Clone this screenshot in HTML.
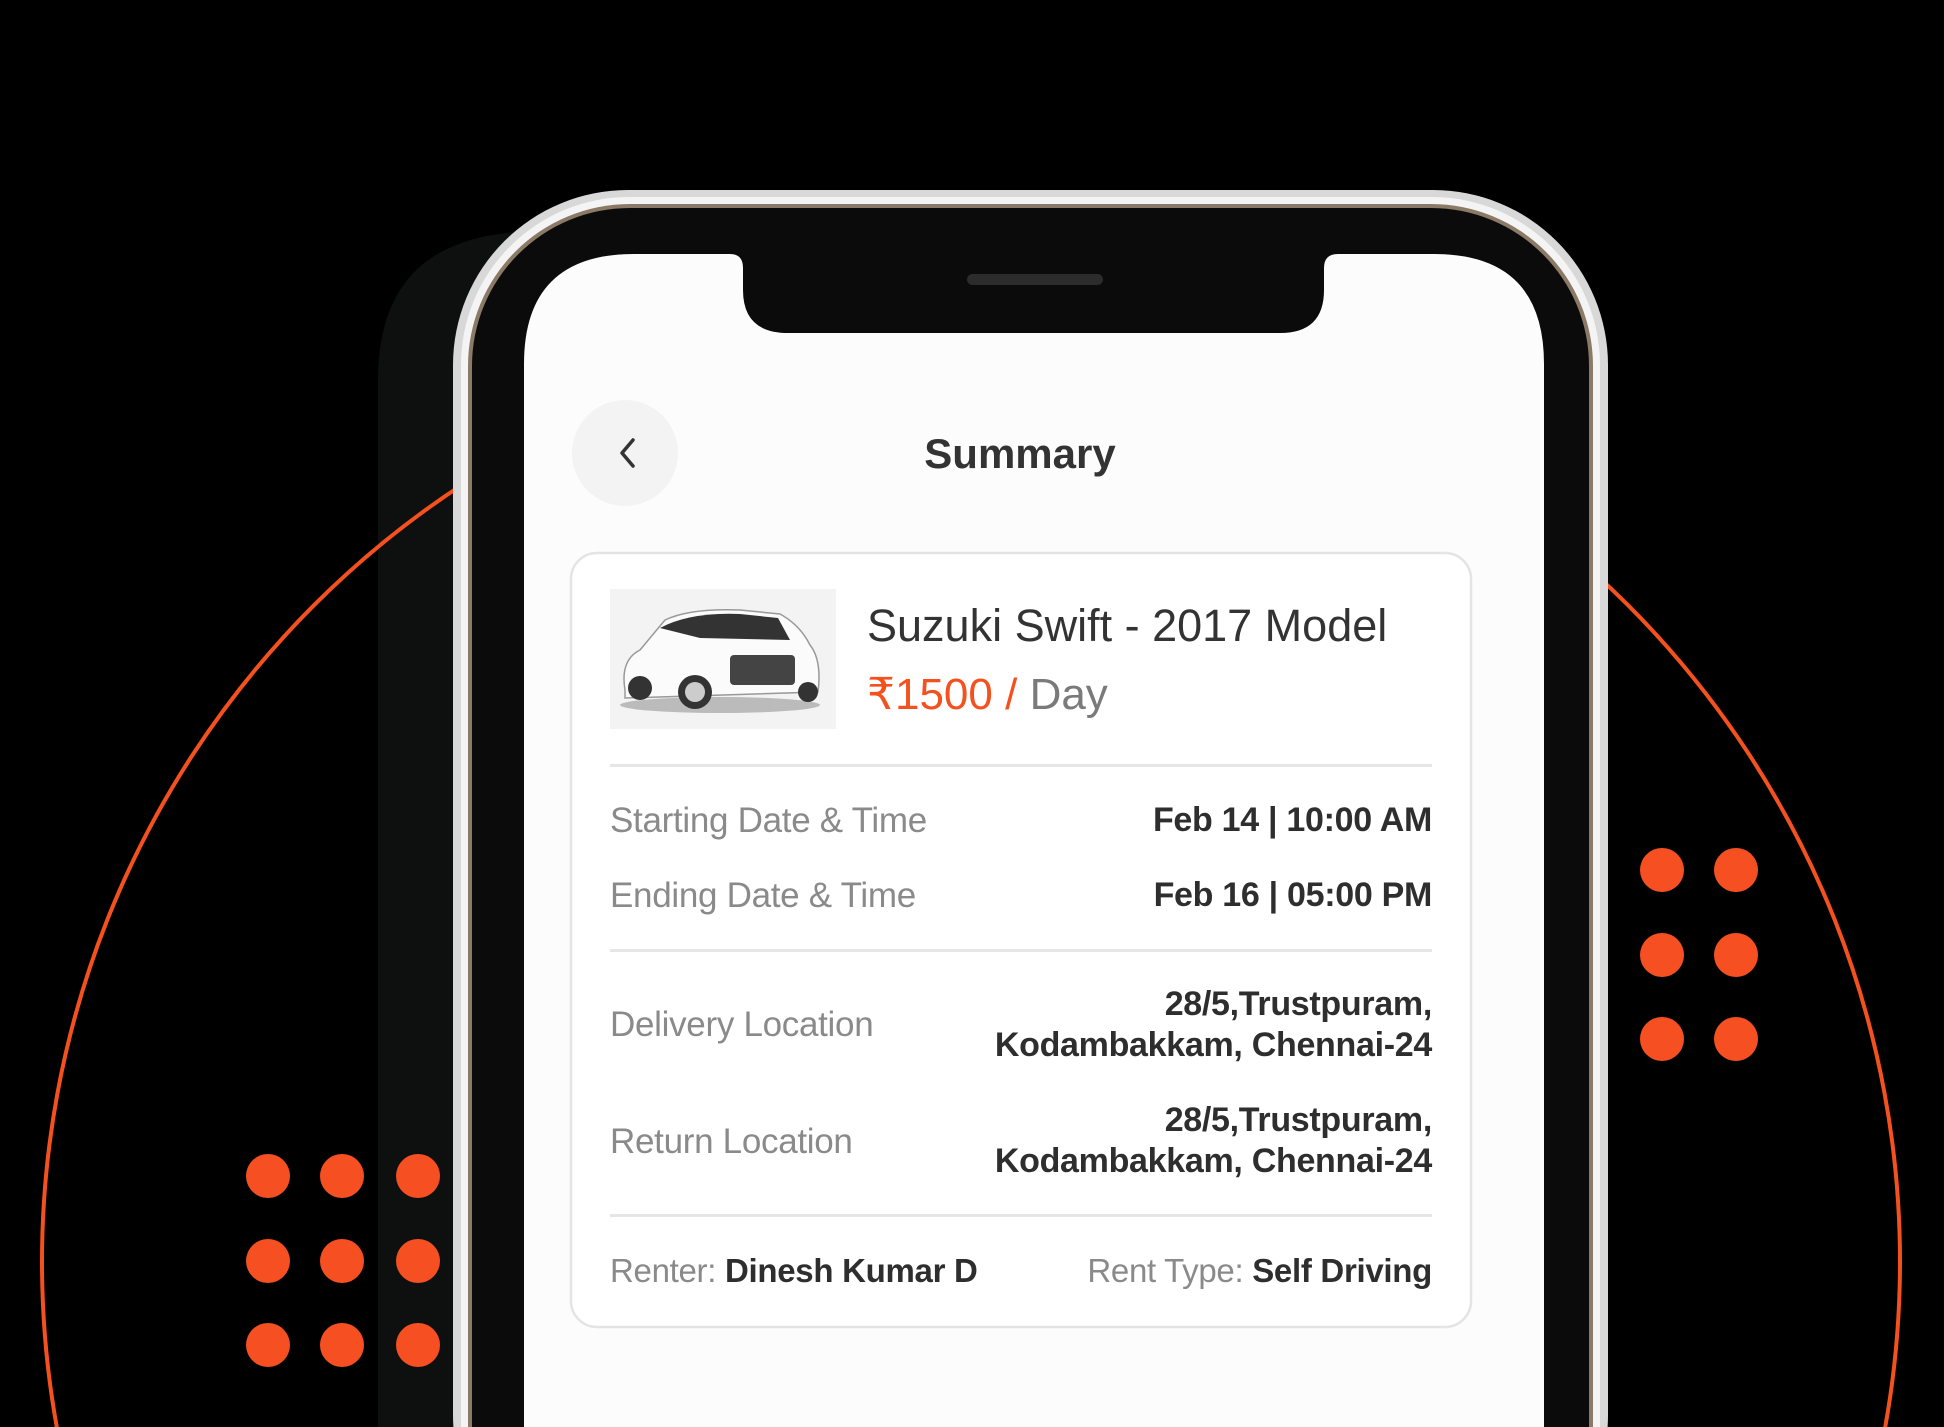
<!DOCTYPE html>
<html><head><meta charset="utf-8"><style>
*{margin:0;padding:0;box-sizing:border-box}
html,body{width:1944px;height:1427px;overflow:hidden}
body{background:#000;position:relative;font-family:"Liberation Sans",sans-serif}
.t{position:absolute;white-space:nowrap;line-height:1}
.lbl{color:#8a8a8a;font-size:35px;letter-spacing:-0.3px}
.val{color:#2e2e2e;font-size:34px;font-weight:bold;letter-spacing:-0.3px}
.r{text-align:right}
</style></head><body>
<svg width="1944" height="1427" style="position:absolute;left:0;top:0">
  <path d="M378 1427 L378 380 Q378 240 520 232 L600 232 L600 1427 Z" fill="#0e1010"/>
  <circle cx="971" cy="1262" r="929" fill="none" stroke="#f4511e" stroke-width="4"/>
  <g fill="#f65022">
    <circle cx="1662" cy="870" r="22"/><circle cx="1736" cy="870" r="22"/>
    <circle cx="1662" cy="955" r="22"/><circle cx="1736" cy="955" r="22"/>
    <circle cx="1662" cy="1039" r="22"/><circle cx="1736" cy="1039" r="22"/>
    <circle cx="268" cy="1176" r="22"/><circle cx="342" cy="1176" r="22"/><circle cx="418" cy="1176" r="22"/>
    <circle cx="268" cy="1261" r="22"/><circle cx="342" cy="1261" r="22"/><circle cx="418" cy="1261" r="22"/>
    <circle cx="268" cy="1345" r="22"/><circle cx="342" cy="1345" r="22"/><circle cx="418" cy="1345" r="22"/>
  </g>
  <rect x="453" y="190" width="1155" height="1400" rx="175" fill="#d8d8d8"/>
  <rect x="461" y="197" width="1139" height="1400" rx="168" fill="#f4f4f4"/>
  <rect x="468" y="204" width="1125" height="1400" rx="162" fill="#8a7a66"/>
  <rect x="472" y="208" width="1117" height="1400" rx="158" fill="#0b0b0b"/>
  <path d="M524 1500 L524 364 Q524 254 634 254 L730 254 Q743 254 743 268 L743 290 Q743 333 788 333 L1280 333 Q1324 333 1324 290 L1324 268 Q1324 254 1338 254 L1434 254 Q1544 254 1544 364 L1544 1500 Z" fill="#fcfcfc"/>
  <rect x="967" y="274" width="136" height="11" rx="5.5" fill="#2c2c2c"/>
  <circle cx="625" cy="453" r="53" fill="#f3f3f3"/>
  <path d="M633 440 L622 453 L633 466" fill="none" stroke="#333" stroke-width="3.5" stroke-linecap="round" stroke-linejoin="round"/>
  <rect x="571" y="553" width="900" height="774" rx="26" fill="#fff" stroke="#e4e4e4" stroke-width="2.5"/>
  <rect x="610" y="589" width="226" height="140" fill="#f3f3f3"/>
  <g>
    <ellipse cx="720" cy="705" rx="100" ry="8" fill="#bbb"/>
    <path d="M625 690 Q620 660 640 650 L665 620 Q690 608 740 610 L780 614 Q800 625 810 645 Q822 660 818 692 L625 698 Z" fill="#fbfbfb" stroke="#999" stroke-width="1.5"/>
    <path d="M660 628 Q690 612 740 614 L778 618 L790 640 L700 638 Z" fill="#333"/>
    <rect x="730" y="655" width="65" height="30" rx="4" fill="#444"/>
    <circle cx="695" cy="692" r="17" fill="#333"/><circle cx="695" cy="692" r="10" fill="#ccc"/>
    <circle cx="640" cy="688" r="12" fill="#333"/>
    <circle cx="808" cy="692" r="10" fill="#333"/>
  </g>
  <g fill="#e6e6e6">
    <rect x="610" y="764" width="822" height="3"/>
    <rect x="610" y="949" width="822" height="3"/>
    <rect x="610" y="1214" width="822" height="3"/>
  </g>
</svg>
<div class="t" style="left:620px;width:800px;top:433px;text-align:center;font-size:42px;color:#333;font-weight:bold">Summary</div>
<div class="t" style="left:867px;top:603px;font-size:45px;color:#333">Suzuki Swift - 2017 Model</div>
<div class="t" style="left:867px;top:673px;font-size:44px;color:#f4511e">₹1500 / <span style="color:#7a7a7a">Day</span></div>
<div class="t lbl" style="left:610px;top:803px">Starting Date &amp; Time</div>
<div class="t val r" style="right:512px;top:803px">Feb 14 | 10:00 AM</div>
<div class="t lbl" style="left:610px;top:878px">Ending Date &amp; Time</div>
<div class="t val r" style="right:512px;top:878px">Feb 16 | 05:00 PM</div>
<div class="t lbl" style="left:610px;top:1007px">Delivery Location</div>
<div class="t r" style="right:512px;top:984px;font-size:34px;color:#2e2e2e;line-height:41px;font-weight:bold;letter-spacing:-0.3px">28/5,Trustpuram,<br>Kodambakkam, Chennai-24</div>
<div class="t lbl" style="left:610px;top:1124px">Return Location</div>
<div class="t r" style="right:512px;top:1100px;font-size:34px;color:#2e2e2e;line-height:41px;font-weight:bold;letter-spacing:-0.3px">28/5,Trustpuram,<br>Kodambakkam, Chennai-24</div>
<div class="t lbl" style="left:610px;top:1254px;font-size:33px">Renter: <span style="color:#2e2e2e;font-weight:bold">Dinesh Kumar D</span></div>
<div class="t lbl r" style="right:512px;top:1254px;font-size:33px">Rent Type: <span style="color:#2e2e2e;font-weight:bold">Self Driving</span></div>
</body></html>
